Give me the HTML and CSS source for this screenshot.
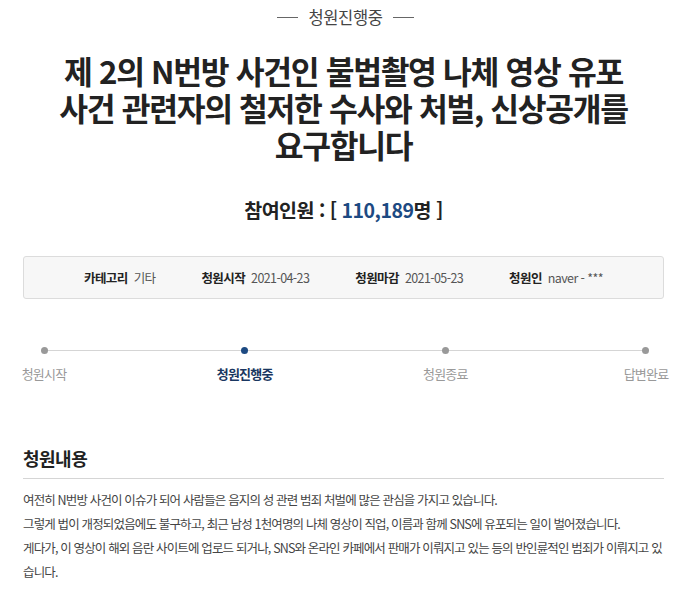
FILE: index.html
```html
<!DOCTYPE html>
<html lang="ko">
<head>
<meta charset="utf-8">
<link rel="stylesheet" href="styles.css">
</head>
<body>
<div class="page">
  <div class="status"><span class="dash"></span><span class="status-text">청원진행중</span><span class="dash"></span></div>
  <h1 class="title">제 2의 N번방 사건인 불법촬영 나체 영상 유포<br>사건 관련자의 철저한 수사와 처벌, 신상공개를<br>요구합니다</h1>
  <div class="count">참여인원 : [ <span class="num">110,189</span>명 ]</div>
  <div class="info">
    <div class="info-item"><b>카테고리</b><span>기타</span></div>
    <div class="info-item"><b>청원시작</b><span>2021-04-23</span></div>
    <div class="info-item"><b>청원마감</b><span>2021-05-23</span></div>
    <div class="info-item"><b>청원인</b><span>naver - ***</span></div>
  </div>
  <div class="progress">
    <div class="step"><i class="dot"></i><span class="label">청원시작</span></div>
    <div class="step active"><i class="dot"></i><span class="label">청원진행중</span></div>
    <div class="step"><i class="dot"></i><span class="label">청원종료</span></div>
    <div class="step"><i class="dot"></i><span class="label">답변완료</span></div>
  </div>
  <h2 class="section">청원내용</h2>
  <div class="content">
    <p>여전히 N번방 사건이 이슈가 되어 사람들은 음지의 성 관련 범죄 처벌에 많은 관심을 가지고 있습니다.</p>
    <p>그렇게 법이 개정되었음에도 불구하고, 최근 남성 1천여명의 나체 영상이 직업, 이름과 함께 SNS에 유포되는 일이 벌어졌습니다.</p>
    <p>게다가, 이 영상이 해외 음란 사이트에 업로드 되거나, SNS와 온라인 카페에서 판매가 이뤄지고 있는 등의 반인륜적인 범죄가 이뤄지고 있습니다.</p>
  </div>
</div>
</body>
</html>
```

FILE: styles.css
```css
html, body {
  margin: 0;
  padding: 0;
  background: #fff;
}
body {
  font-family: "Noto Sans CJK KR", "Noto Sans", sans-serif;
  color: #333;
}
.page {
  width: 641px;
  margin-left: 23px;
}
.status {
  display: flex;
  justify-content: center;
  align-items: center;
  gap: 11px;
  height: 34px;
  padding-left: 4px;
}
.dash {
  width: 21px;
  height: 1px;
  background: #666;
}
.status-text {
  font-size: 16.5px;
  color: #444;
  letter-spacing: -0.4px;
}
.title {
  margin: 18px 0 0;
  text-align: center;
  font-size: 31.3px;
  line-height: 37px;
  font-weight: 700;
  letter-spacing: -1.3px;
  color: #222;
}
.count {
  margin-top: 34px;
  text-align: center;
  font-size: 19.5px;
  font-weight: 700;
  letter-spacing: -0.5px;
  color: #222;
  line-height: 26px;
}
.num {
  color: #1d4a82;
}
.info {
  margin-top: 33px;
  height: 41px;
  border: 1px solid #dcdcdc;
  border-radius: 3px;
  background: #f7f7f7;
  display: flex;
  align-items: center;
  justify-content: center;
  gap: 46px;
  font-size: 12.5px;
  letter-spacing: -0.6px;
}
.info-item b {
  font-weight: 700;
  color: #222;
  margin-right: 6px;
}
.info-item span {
  color: #555;
}
.progress {
  margin-top: 44px;
  margin-right: -3px;
  display: flex;
  justify-content: space-between;
  position: relative;
}
.progress::before {
  content: "";
  position: absolute;
  left: 20px;
  right: 20px;
  top: 7px;
  height: 1px;
  background: #d5d5d5;
}
.step {
  width: 42px;
  display: flex;
  flex-direction: column;
  align-items: center;
  position: relative;
}
.dot {
  width: 7px;
  height: 7px;
  border-radius: 50%;
  background: #999;
  margin-top: 4px;
}
.label {
  margin-top: 10px;
  font-size: 13px;
  white-space: nowrap;
  color: #999;
  letter-spacing: -0.8px;
}
.step.active .dot {
  background: #1d4a82;
}
.step.active .label {
  color: #1a3761;
  font-weight: 700;
}
.section {
  margin: 63px 0 0;
  font-size: 18px;
  font-weight: 700;
  color: #222;
  letter-spacing: -0.5px;
  padding-bottom: 8px;
  border-bottom: 1px solid #d5d5d5;
  line-height: 24px;
}
.content {
  margin-top: 9px;
  font-size: 12.5px;
  line-height: 24px;
  color: #444;
  letter-spacing: -0.85px;
  word-break: break-all;
}
.content p {
  margin: 0;
}
```
